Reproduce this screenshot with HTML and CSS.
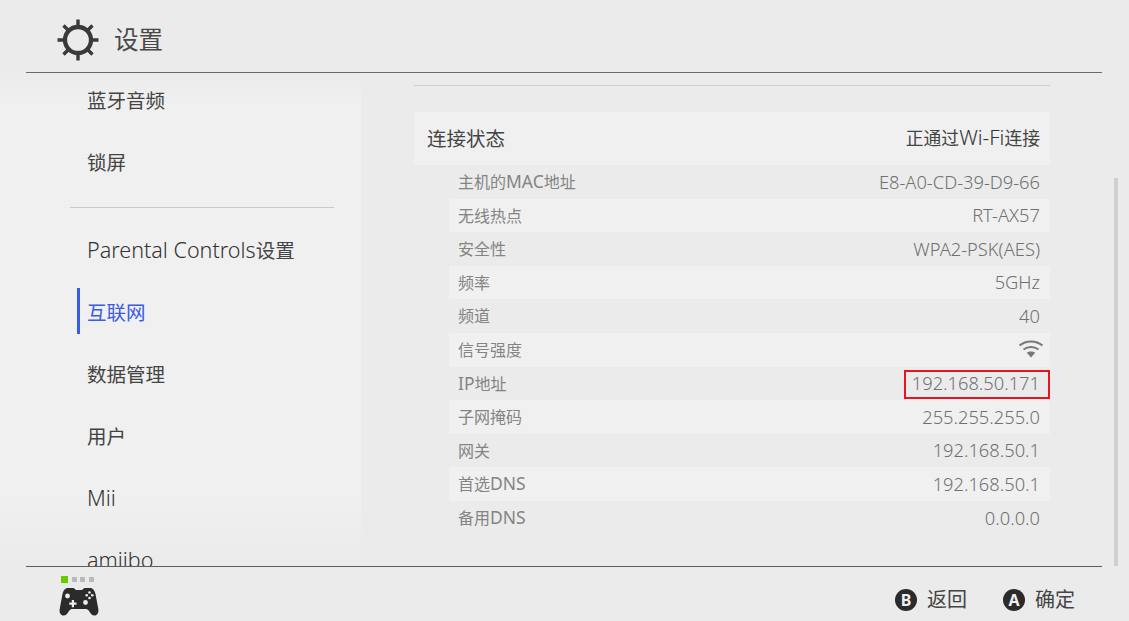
FILE: index.html
```html
<!DOCTYPE html>
<html lang="zh-CN">
<head>
<meta charset="utf-8">
<title>设置</title>
<link rel="stylesheet" href="styles.css">
</head>
<body>
<div class="app">
  <header class="top">
    <svg class="gear" width="44" height="44" viewBox="0 0 44 44" aria-hidden="true">
      <circle cx="22" cy="22" r="13" fill="none" stroke="#3a3a3a" stroke-width="4.300"/>
      <g stroke="#3a3a3a" stroke-width="3.400" stroke-linecap="butt">
        <path d="M22 1.500V9M22 35V42.500M1.500 22H9M35 22H42.500M7.500 7.500L13 13M31 31L36.500 36.500M36.500 7.500L31 13M13 31L7.500 36.500"/>
      </g>
    </svg>
    <h1 class="title">设置</h1>
  </header>
  <main class="main">
    <nav class="side">
      <ul class="menu">
        <li class="item">蓝牙音频</li>
        <li class="item">锁屏</li>
        <li class="sep"></li>
        <li class="item"><span class="lat">Parental Controls</span>设置</li>
        <li class="item active">互联网</li>
        <li class="item">数据管理</li>
        <li class="item">用户</li>
        <li class="item"><span class="lat">Mii</span></li>
        <li class="item"><span class="lat">amiibo</span></li>
      </ul>
    </nav>
    <section class="content">
      <div class="rule"></div>
      <div class="status"><span class="status-label">连接状态</span><span class="status-value">正通过<span class="lat">Wi-Fi</span>连接</span></div>
      <ul class="rows">
        <li class="row"><span>主机的<span class="lat">MAC</span>地址</span><span class="val">E8-A0-CD-39-D9-66</span></li>
        <li class="row"><span>无线热点</span><span class="val">RT-AX57</span></li>
        <li class="row"><span>安全性</span><span class="val">WPA2-PSK(AES)</span></li>
        <li class="row"><span>频率</span><span class="val">5GHz</span></li>
        <li class="row"><span>频道</span><span class="val">40</span></li>
        <li class="row"><span>信号强度</span>
          <svg class="wifi" width="26" height="20" viewBox="0 0 26 20" aria-hidden="true">
            <g fill="none" stroke="#777" stroke-width="2">
              <path d="M1.500 6.500C8 1 18 1 24.500 6.500"/>
              <path d="M5.500 10.500C10 7 16 7 20.500 10.500"/>
            </g>
            <path d="M8.800 13.800C11 12 15 12 17.200 13.800L13 18.500Z" fill="#777"/>
          </svg>
        </li>
        <li class="row marked"><span><span class="lat">IP</span>地址</span><span class="val">192.168.50.171</span></li>
        <li class="row"><span>子网掩码</span><span class="val">255.255.255.0</span></li>
        <li class="row"><span>网关</span><span class="val">192.168.50.1</span></li>
        <li class="row"><span>首选<span class="lat">DNS</span></span><span class="val">192.168.50.1</span></li>
        <li class="row"><span>备用<span class="lat">DNS</span></span><span class="val">0.0.0.0</span></li>
      </ul>
    </section>
    <div class="scrollbar"></div>
  </main>
  <footer class="bottom">
    <div class="player">
      <div class="lights"><i class="light on"></i><i class="light"></i><i class="light"></i><i class="light"></i></div>
      <svg class="pad" width="40" height="29" viewBox="0 0 40 29" aria-hidden="true">
        <path d="M9 1H14C15.500 1 16 2.500 17 3H23C24 2.500 24.500 1 26 1H31C34 1 35.500 3.500 36.500 7L39.300 22C40 26 38 28.500 35.500 28.500C33 28.500 31.500 26.500 30 24C29 22.500 28 22 26.500 22H13.500C12 22 11 22.500 10 24C8.500 26.500 7 28.500 4.500 28.500C2 28.500 0 26 .7 22L3.500 7C4.500 3.500 6 1 9 1Z" fill="#2b2b2b"/>
        <circle cx="8.500" cy="9" r="2.400" fill="#eee"/>
        <circle cx="26.500" cy="15.500" r="2.400" fill="#eee"/>
        <path d="M12.800 13H15V15.500H17.500V17.700H15V20.200H12.800V17.700H10.300V15.500H12.800Z" fill="#eee"/>
        <g fill="#eee">
          <circle cx="30.500" cy="5.500" r="1.300"/><circle cx="30.500" cy="11" r="1.300"/>
          <circle cx="27.700" cy="8.200" r="1.300"/><circle cx="33.300" cy="8.200" r="1.300"/>
        </g>
      </svg>
    </div>
    <div class="actions">
      <div class="action"><span class="btn">B</span><span>返回</span></div>
      <div class="action"><span class="btn">A</span><span>确定</span></div>
    </div>
  </footer>
</div>
</body>
</html>
```
FILE: styles.css
```css
* { box-sizing: border-box; }
html, body { margin: 0; padding: 0; }
body {
  background: #ebebeb;
  font-family: "Noto Sans", "Noto Sans CJK SC", sans-serif;
  color: #3a3a3a;
}
ul { list-style: none; margin: 0; padding: 0; }
.app {
  width: 1129px;
  height: 621px;
  display: flex;
  flex-direction: column;
  overflow: hidden;
}
.top {
  flex: none;
  height: 73px;
  margin: 0 27px 0 26px;
  padding-left: 30px;
  padding-top: 6px;
  border-bottom: 1px solid #6b6b6b;
  display: flex;
  align-items: center;
  gap: 14px;
}
.gear { flex: none; margin-top: 2px; }
.title {
  margin: 1px 0 0;
  font-size: 24.500px;
  font-weight: 400;
  line-height: 34px;
  color: #484848;
}
.main {
  flex: none;
  height: 493px;
  position: relative;
  display: flex;
  overflow: hidden;
}
.side {
  flex: none;
  width: 361px;
  background: linear-gradient(to bottom, #ebebeb 0, #f0f0f0 32px, #f0f0f0 420px, #ebebeb 493px);
}
.menu {
  margin-top: -5px;
  padding-left: 26px;
}
.item {
  height: 62px;
  margin-left: 51px;
  padding-left: 7px;
  display: flex;
  align-items: center;
  font-size: 19.5px;
  color: #444;
  border-left: 3px solid transparent;
}
.lat { font-size: 1.105em; font-weight: 300; }
.item .lat { color: #333; }
.item.active {
  color: #3a5ae8;
  border-left-color: #3a5ae8;
  height: 46px;
  margin-top: 8px;
  margin-bottom: 8px;
}
.sep {
  height: 26px;
  margin-left: 44px;
  width: 264px;
  padding-top: 15px;
}
.sep::before {
  content: "";
  display: block;
  height: 1px;
  background: #c9c9c9;
}
.content {
  flex: none;
  width: 636px;
  margin-left: 53px;
  padding-top: 12px;
}
.rule {
  height: 1px;
  background: #cdcdcd;
  margin-bottom: 26px;
}
.status {
  height: 53px;
  padding: 0 10px 3px 13px;
  background: #f0f0f0;
  display: flex;
  align-items: center;
  justify-content: space-between;
}
.status-label { font-size: 19.5px; color: #444; }
.status-value { font-size: 17.8px; color: #444; }
.status-value .lat { font-size: 1.16em; font-weight: 300; color: #333; }
.rows { margin-left: 35px; }
.row {
  height: 33.6px;
  padding: 0 10px 1.400px 9px;
  display: flex;
  align-items: center;
  justify-content: space-between;
  font-size: 16px;
  color: #848484;
}
.row:nth-child(even) { background: #f0f0f0; }
.val { font-size: 18.3px; font-weight: 300; color: #707070; }
.row .lat { font-weight: 400; font-size: 1.09em; }
.marked { position: relative; }
.marked::after {
  content: "";
  box-sizing: border-box;
  position: absolute;
  right: 0;
  top: 3.400px;
  width: 146px;
  height: 29px;
  border: 2px solid #e8141f;
}
.wifi { flex: none; margin-right: -4px; }
.scrollbar {
  position: absolute;
  left: 1114px;
  top: 105px;
  width: 4px;
  height: 388px;
  background: #cfcfcf;
}
.bottom {
  flex: none;
  height: 55px;
  margin: 0 27px 0 26px;
  border-top: 1px solid #5c5c5c;
  display: flex;
  align-items: flex-start;
  justify-content: space-between;
}
.player {
  margin-left: 33px;
  padding-top: 10px;
}
.lights { display: flex; gap: 3.700px; margin-left: 2px; }
.light { width: 5px; height: 5px; background: #b9b9b9; display: block; }
.light.on { width: 7px; height: 7px; margin-top: -1px; background: #66cc00; }
.pad { display: block; margin-top: 4px; }
.actions {
  display: flex;
  gap: 36px;
  padding-top: 18px;
  margin-right: 27px;
}
.action {
  display: flex;
  align-items: center;
  gap: 10px;
  font-size: 20px;
  line-height: 30px;
  color: #444;
}
.btn {
  width: 22px;
  height: 22px;
  border-radius: 50%;
  background: #2b2b2b;
  color: #eee;
  font-size: 16px;
  font-weight: 700;
  line-height: 22px;
  text-align: center;
}
```
